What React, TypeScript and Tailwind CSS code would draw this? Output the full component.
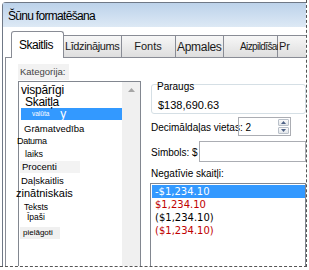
function SpinArrow({ up }: { up?: boolean }) {
  return (
    <svg width="5" height="3" viewBox="0 0 5 3" className="block">
      <path d={up ? 'M0 3 L2.5 0 L5 3 Z' : 'M0 0 L2.5 3 L5 0 Z'} fill="#4d6185" />
    </svg>
  );
}

export default function App() {
  return (
    <div className="h-[267px] w-[307px] overflow-hidden border-r border-b border-dashed border-[#555] bg-white font-['Liberation_Sans','DejaVu_Sans',sans-serif] text-[#111]">
      <div className="ml-[2px] mt-[2px] rounded-tl-[4px] border-l border-t border-[#6f7886]">
        {/* title bar */}
        <div className="h-[24px] bg-gradient-to-b from-[#bcd2ea] to-[#dde9f5] pl-[5px] text-[12px] leading-[26px] tracking-[-0.7px] text-black">
          Šūnu formatēšana
        </div>

        {/* tabs */}
        <div className="flex h-[30px] items-end pl-[8px] text-[12px] text-[#1a1a1a]">
          <div className="relative top-px z-10 flex h-[27px] w-[56px] items-center rounded-t-[3px] border border-b-0 border-[#898c95] bg-white pl-[7px] tracking-[-0.5px] text-black">
            Skaitlis
          </div>
          <div className="flex h-[22px] w-[62px] items-center justify-center border-t border-r border-[#898c95] bg-gradient-to-b from-[#f7f7f7] to-[#dedede] text-[11px] tracking-[-0.4px]">
            Līdzinājums
          </div>
          <div className="flex h-[22px] w-[58px] items-center justify-center border-t border-r border-[#898c95] bg-gradient-to-b from-[#f7f7f7] to-[#dedede] text-[11px]">
            Fonts
          </div>
          <div className="flex h-[22px] w-[52px] items-center justify-center border-t border-r border-[#898c95] bg-gradient-to-b from-[#f7f7f7] to-[#dedede] tracking-[-0.3px]">
            Apmales
          </div>
          <div className="flex h-[22px] w-[54px] items-center whitespace-nowrap border-t border-r border-[#898c95] bg-gradient-to-b from-[#f7f7f7] to-[#dedede] pl-[16px] text-[10px] tracking-[-0.6px]">
            Aizpildīšana
          </div>
          <div className="flex h-[22px] w-[30px] items-center border-t border-[#898c95] bg-gradient-to-b from-[#f7f7f7] to-[#dedede] pl-px text-[11px]">
            Pr
          </div>
        </div>

        {/* tab page */}
        <div className="ml-[2px] flex h-[230px] gap-[10px] border-l border-t border-[#898c95] bg-white pl-[12px]">
          {/* categories */}
          <div className="flex w-[123px] flex-col">
            <div className="mt-[6px] h-[16px] w-[51px] bg-[#f2f2f2] pl-[2px] text-[9.5px] leading-[16px] text-[#444]">Kategorija:</div>
            <div className="mt-px flex h-[200px] border border-[#828790]">
              <div className="w-[103px] text-black">
                <div className="mt-px h-[14px] pl-[2px] text-[12px] leading-[14px] tracking-[-0.2px]">vispārīgi</div>
                <div className="h-[11px] pl-[6px] text-[12px] leading-[11px] tracking-[-0.3px]">Skaitļa</div>
                <div className="ml-[2px] flex h-[12px] w-[101px] items-center bg-[#3399ff] text-white">
                  <span className="pl-[11px] text-[6.5px] leading-[12px]">valūta</span>
                  <span className="ml-[11px] text-[12px] leading-[12px]">y</span>
                </div>
                <div className="mt-[3px] h-[12px] pl-[5px] text-[9.5px] leading-[12px]">Grāmatvedība</div>
                <div className="-ml-[2px] h-[12px] text-[9px] leading-[12px] tracking-[-0.3px]">Datuma</div>
                <div className="mt-px h-[12px] pl-[6px] text-[9px] leading-[12px]">laiks</div>
                <div className="mt-px flex h-[12px] pl-px">
                  <div className="h-[12px] w-[60px] bg-[#f3f3f3] pl-[2px] text-[9.5px] leading-[12px]">Procenti</div>
                </div>
                <div className="mt-[2px] h-[12px] pl-[2px] text-[9.5px] leading-[12px]">Daļskaitlis</div>
                <div className="-ml-[3px] h-[13px] text-[11px] leading-[13px]">zinātniskais</div>
                <div className="mt-[2px] h-[10px] pl-[5px] text-[8.5px] leading-[10px]">Teksts</div>
                <div className="h-[10px] pl-[8px] text-[8.5px] leading-[10px]">Īpaši</div>
                <div className="mt-[5px] flex h-[12px] pl-px">
                  <div className="h-[12px] w-[40px] bg-[#f0f0f0] pl-[3px] text-[8px] leading-[12px]">pielāgoti</div>
                </div>
              </div>
              <div className="flex w-[18px] justify-center bg-[#f0f0f0] pt-[6px]">
                <svg width="7" height="4" viewBox="0 0 7 4" className="block">
                  <path d="M0 4 L3.5 0 L7 4 Z" fill="#a6a6a6" />
                </svg>
              </div>
            </div>
          </div>

          {/* options */}
          <div className="flex w-[180px] flex-col pt-[26px] text-[10px] text-black">
            <div className="h-[34px] rounded-[3px] border border-[#d5dfe5]">
              <div className="-mt-[3px] ml-[5px] h-[10px] leading-[10px]">Paraugs</div>
              <div className="ml-[6px] mt-[6px] h-[14px] text-[11px] leading-[14px]">$138,690.63</div>
            </div>

            <div className="relative mt-[5px] h-[18px] leading-[18px]">
              Decimāldaļas vietas: 2
              <div className="absolute left-[87px] top-[-2px] flex h-[19px] w-[53px] justify-end border border-[#abadb3] p-px">
                <div className="flex w-[11px] flex-col gap-px">
                  <div className="flex flex-1 items-center justify-center rounded-[1px] border border-[#b9c0c9] bg-gradient-to-b from-[#fafafa] to-[#e2e6ea]">
                    <SpinArrow up />
                  </div>
                  <div className="flex flex-1 items-center justify-center rounded-[1px] border border-[#b9c0c9] bg-gradient-to-b from-[#fafafa] to-[#e2e6ea]">
                    <SpinArrow />
                  </div>
                </div>
              </div>
            </div>

            <div className="mt-[4px] flex h-[21px]">
              <span className="pt-[3px] leading-[18px]">Simbols: $</span>
              <div className="ml-px flex-1 border border-[#abadb3]" />
            </div>

            <div className="mt-[6px] h-[12px] leading-[12px]">Negatīvie skaitļi:</div>
            <div className="-ml-px mt-[3px] h-[120px] border border-[#828790] pl-px pt-px font-['DejaVu_Sans',sans-serif] text-[10px]">
              <div className="h-[13px] bg-[#3399ff] pl-[3px] leading-[13px] text-white">-$1,234.10</div>
              <div className="h-[13px] pl-[3px] leading-[13px] text-[#c00000]">$1,234.10</div>
              <div className="h-[13px] pl-[3px] leading-[13px] text-black">($1,234.10)</div>
              <div className="h-[13px] pl-[3px] leading-[13px] text-[#c00000]">($1,234.10)</div>
            </div>
          </div>
        </div>
      </div>
    </div>
  );
}
